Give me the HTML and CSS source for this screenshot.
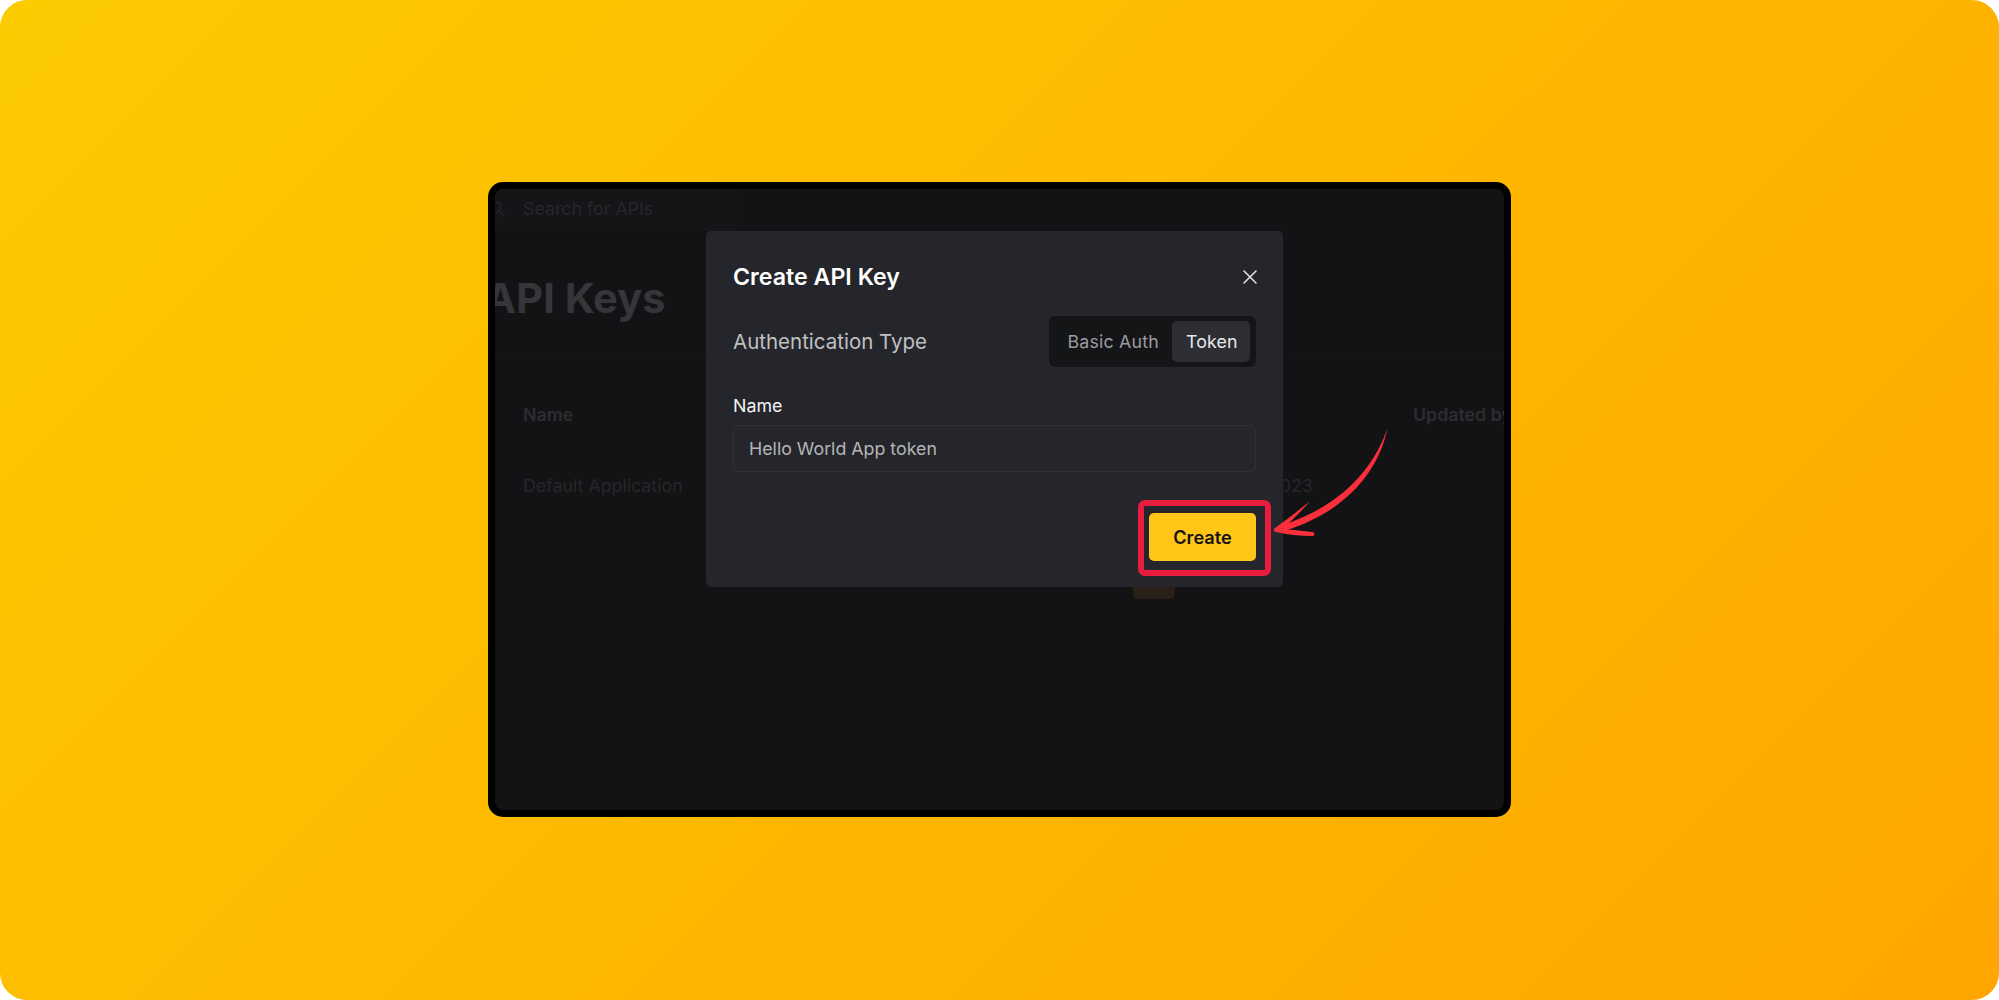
FILE: index.html
```html
<!DOCTYPE html>
<html lang="en">
<head>
<meta charset="utf-8">
<title>Create API Key</title>
<link rel="stylesheet" href="styles.css">
</head>
<body>
<main class="stage">
  <section class="frame">
    <div class="app">
      <header class="search">
        <svg class="search-icon" viewBox="0 0 24 24" fill="none" stroke="currentColor" stroke-width="2" stroke-linecap="round"><circle cx="10" cy="10" r="7.5"/><path d="M16 16l6 6"/></svg>
        <span class="search-text">Search for APIs</span>
      </header>
      <div class="title-block">
        <h1 class="page-title">API Keys</h1>
      </div>
      <div class="table">
        <div class="cell head">Name</div>
        <div class="cell head">Created</div>
        <div class="cell head">Updated by</div>
        <div class="cell">Default Application</div>
        <div class="cell">Jan 12, 2023</div>
        <div class="cell"></div>
      </div>
      <div class="ghost-button"></div>
    </div>
    <div class="modal">
      <div class="modal-head">
        <h2 class="modal-title">Create API Key</h2>
        <svg class="close" viewBox="0 0 14 14" fill="none" stroke="currentColor" stroke-width="1.5" stroke-linecap="round"><path d="M1 1l12 12M13 1L1 13"/></svg>
      </div>
      <div class="auth-row">
        <span class="auth-label">Authentication Type</span>
        <div class="toggle">
          <span class="toggle-item">Basic Auth</span>
          <span class="toggle-item active">Token</span>
        </div>
      </div>
      <label class="field-label">Name</label>
      <div class="input">Hello World App token</div>
      <div class="actions">
        <button class="create">Create</button>
        <span class="highlight"></span>
      </div>
    </div>
  </section>
  <svg class="arrow" viewBox="0 0 140 125">
    <path class="arrow-fill" d="M127.5 8C119 51 86 92 24 111L21 105.5C82 86 114 48 127.5 8Z"/>
    <path class="arrow-fill" d="M49.5 81.5C39 90 26 100 14.5 108.5C13.5 110 14 111.5 16 112C19 110.5 22 108.5 26 106C34 98 43 90 49.5 81.5Z"/>
    <path class="arrow-fill" d="M15 108.5C28 109.5 41 110.5 52.5 112C55 112.5 55 116 52.5 116C40 116 27 114.5 16 112C13 111 13 109 15 108.5Z"/>
  </svg>
</main>
</body>
</html>
```
FILE: styles.css
```css
* { box-sizing: border-box; }
html, body { margin: 0; padding: 0; background: #fff; }
body { font-family: Inter, "Liberation Sans", sans-serif; }

.stage {
  position: relative;
  width: 1999px;
  height: 1000px;
  padding-top: 182px;
  border-radius: 27px;
  background: linear-gradient(135deg, #fccb00 0%, #ffa600 100%);
  display: flex;
  align-items: flex-start;
  justify-content: center;
  overflow: hidden;
}

.frame {
  position: relative;
  width: 1023px;
  height: 635px;
  border: 7px solid #000;
  border-radius: 15px;
  background: #131315;
}

.app {
  height: 100%;
  border-radius: 8px;
  overflow: hidden;
  color: #2a2b2e;
  position: relative;
}

.search {
  height: 42px;
  width: 242px;
  padding-bottom: 4px;
  display: flex;
  align-items: center;
  gap: 18px;
  background: #141517;
  color: #26272a;
  font-size: 17.8px;
}
.search-icon { width: 17px; height: 17px; margin-left: -7px; flex: none; }

.title-block {
  padding: 40px 0 32px;
  border-bottom: 1px solid #161719;
}
.page-title {
  margin: 0 0 0 -10px;
  font-size: 41.7px;
  line-height: 54px;
  font-weight: 700;
  color: #353639;
  white-space: nowrap;
}

.table {
  margin-top: 46px;
  padding-left: 28px;
  display: grid;
  grid-template-columns: 682px 208px 200px;
  grid-auto-rows: 71px;
  width: 1100px;
  font-size: 17.8px;
  white-space: nowrap;
  color: #26272a;
}
.head { font-weight: 600; color: #2c2d30; }
.cell { line-height: 22px; }

.ghost-button {
  position: absolute;
  left: 638px;
  top: 371px;
  width: 42px;
  height: 39px;
  border-radius: 5px;
  background: #2a2018;
}

.modal {
  position: absolute;
  left: 211px;
  top: 42px;
  width: 577px;
  height: 356px;
  padding: 23px 27px 26px 27px;
  border-radius: 5px;
  background: #25262b;
  color: #fff;
}

.modal-head {
  height: 46px;
  display: flex;
  align-items: center;
  justify-content: space-between;
}
.modal-title { margin: 0; font-size: 23.2px; line-height: 46px; font-weight: 600; }
.close { width: 14px; height: 14px; margin-right: -1px; color: #e4e4e6; }

.auth-row {
  margin-top: 16px;
  height: 51px;
  display: flex;
  align-items: center;
  justify-content: space-between;
}
.auth-label { font-size: 20.5px; color: #c0c1c3; }

.toggle {
  height: 51px;
  padding: 5px 6px;
  display: flex;
  align-items: center;
  border-radius: 6px;
  background: #141517;
  font-size: 17.8px;
}
.toggle-item { padding: 0 13px 0 12px; line-height: 41px; color: #9b9c9f; letter-spacing: .2px; }
.toggle-item.active { padding: 0 12.5px 0 14px; border-radius: 5px; background: #2d2e33; color: #e9e9ea; letter-spacing: .1px; }

.field-label {
  display: block;
  margin-top: 27px;
  font-size: 17.8px;
  line-height: 24px;
  font-weight: 400;
  color: #f4f4f5;
}

.input {
  margin-top: 7px;
  height: 47px;
  padding-left: 15px;
  display: flex;
  align-items: center;
  border: 1px solid #2f3036;
  border-radius: 5px;
  font-size: 17.8px;
  color: #b4b5b8;
}

.actions {
  position: relative;
  margin-top: 41px;
  display: flex;
  justify-content: flex-end;
}
.create {
  width: 107px;
  height: 48px;
  border: 0;
  border-radius: 5px;
  background: #ffc517;
  color: #141414;
  font: 600 18.2px Inter, "Liberation Sans", sans-serif;
}
.highlight {
  position: absolute;
  left: 405px;
  top: -13px;
  width: 133px;
  height: 76px;
  border: 6px solid #e81c3d;
  border-radius: 7px;
  pointer-events: none;
}

.arrow {
  position: absolute;
  left: 1260px;
  top: 420px;
  width: 140px;
  height: 125px;
}
.arrow-fill { fill: #f92f3b; }
```
